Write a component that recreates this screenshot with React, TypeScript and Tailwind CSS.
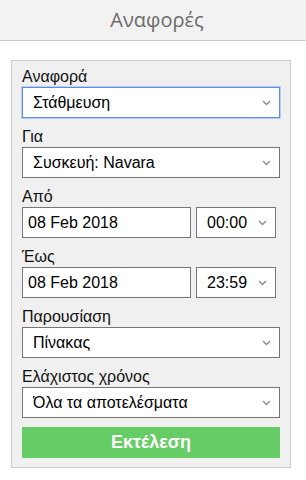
import { ReactNode } from 'react';

function Chevron() {
  return (
    <svg
      className="pointer-events-none absolute right-[9px] top-1/2 -translate-y-1/2"
      width="9"
      height="6"
      viewBox="0 0 9 6"
      fill="none"
    >
      <path d="M1 1l3.5 3.5L8 1" stroke="#8a8a8a" strokeWidth="1.3" />
    </svg>
  );
}

function Select({ value, focused, className }: { value: string; focused?: boolean; className?: string }) {
  return (
    <div className={`relative ${className ?? 'w-full'}`}>
      <select
        defaultValue={value}
        className={`h-[31px] w-full appearance-none bg-white pl-[10px] pr-6 text-[16px] text-black outline-none ${
          focused ? 'border border-[#5b8ee6] shadow-[0_0_0_1px_#b7cdf3]' : 'border border-[#767676]'
        }`}
      >
        <option>{value}</option>
      </select>
      <Chevron />
    </div>
  );
}

function Field({ label, children }: { label: string; children: ReactNode }) {
  return (
    <div className="mb-[9px]">
      <div className="h-[20px] text-[16px] leading-[20px] text-[#111]">{label}</div>
      {children}
    </div>
  );
}

function DateRow({ date, time }: { date: string; time: string }) {
  return (
    <div className="flex gap-[5px]">
      <input
        defaultValue={date}
        className="h-[31px] w-[169px] border border-[#767676] bg-white px-[5px] text-[16px] text-black outline-none"
      />
      <Select value={time} className="w-[80px]" />
    </div>
  );
}

export default function App() {
  return (
    <div className="min-h-[480px] bg-white" style={{ fontFamily: '"Liberation Sans", Arial, sans-serif' }}>
      {/* Header */}
      <div className="flex h-[41px] items-center justify-center border-b border-[#cccccc] bg-[#f2f2f2] pl-2">
        <span className="text-[20px] text-[#6b6b6b]" style={{ fontFamily: '"Open Sans", sans-serif' }}>
          Αναφορές
        </span>
      </div>

      {/* Form panel */}
      <div className="ml-[11px] mt-[19px] w-[280px] border border-[#cccccc] bg-[#f0f0f0] px-[10px] pt-[6px] pb-[9px]">
        <Field label="Αναφορά">
          <Select value="Στάθμευση" focused />
        </Field>
        <Field label="Για">
          <Select value="Συσκευή: Navara" />
        </Field>
        <Field label="Από">
          <DateRow date="08 Feb 2018" time="00:00" />
        </Field>
        <Field label="Έως">
          <DateRow date="08 Feb 2018" time="23:59" />
        </Field>
        <Field label="Παρουσίαση">
          <Select value="Πίνακας" />
        </Field>
        <Field label="Ελάχιστος χρόνος">
          <Select value="Όλα τα αποτελέσματα" />
        </Field>
        <button className="h-[31px] w-full bg-[#66cc66] text-[18px] font-bold text-white">Εκτέλεση</button>
      </div>
    </div>
  );
}
